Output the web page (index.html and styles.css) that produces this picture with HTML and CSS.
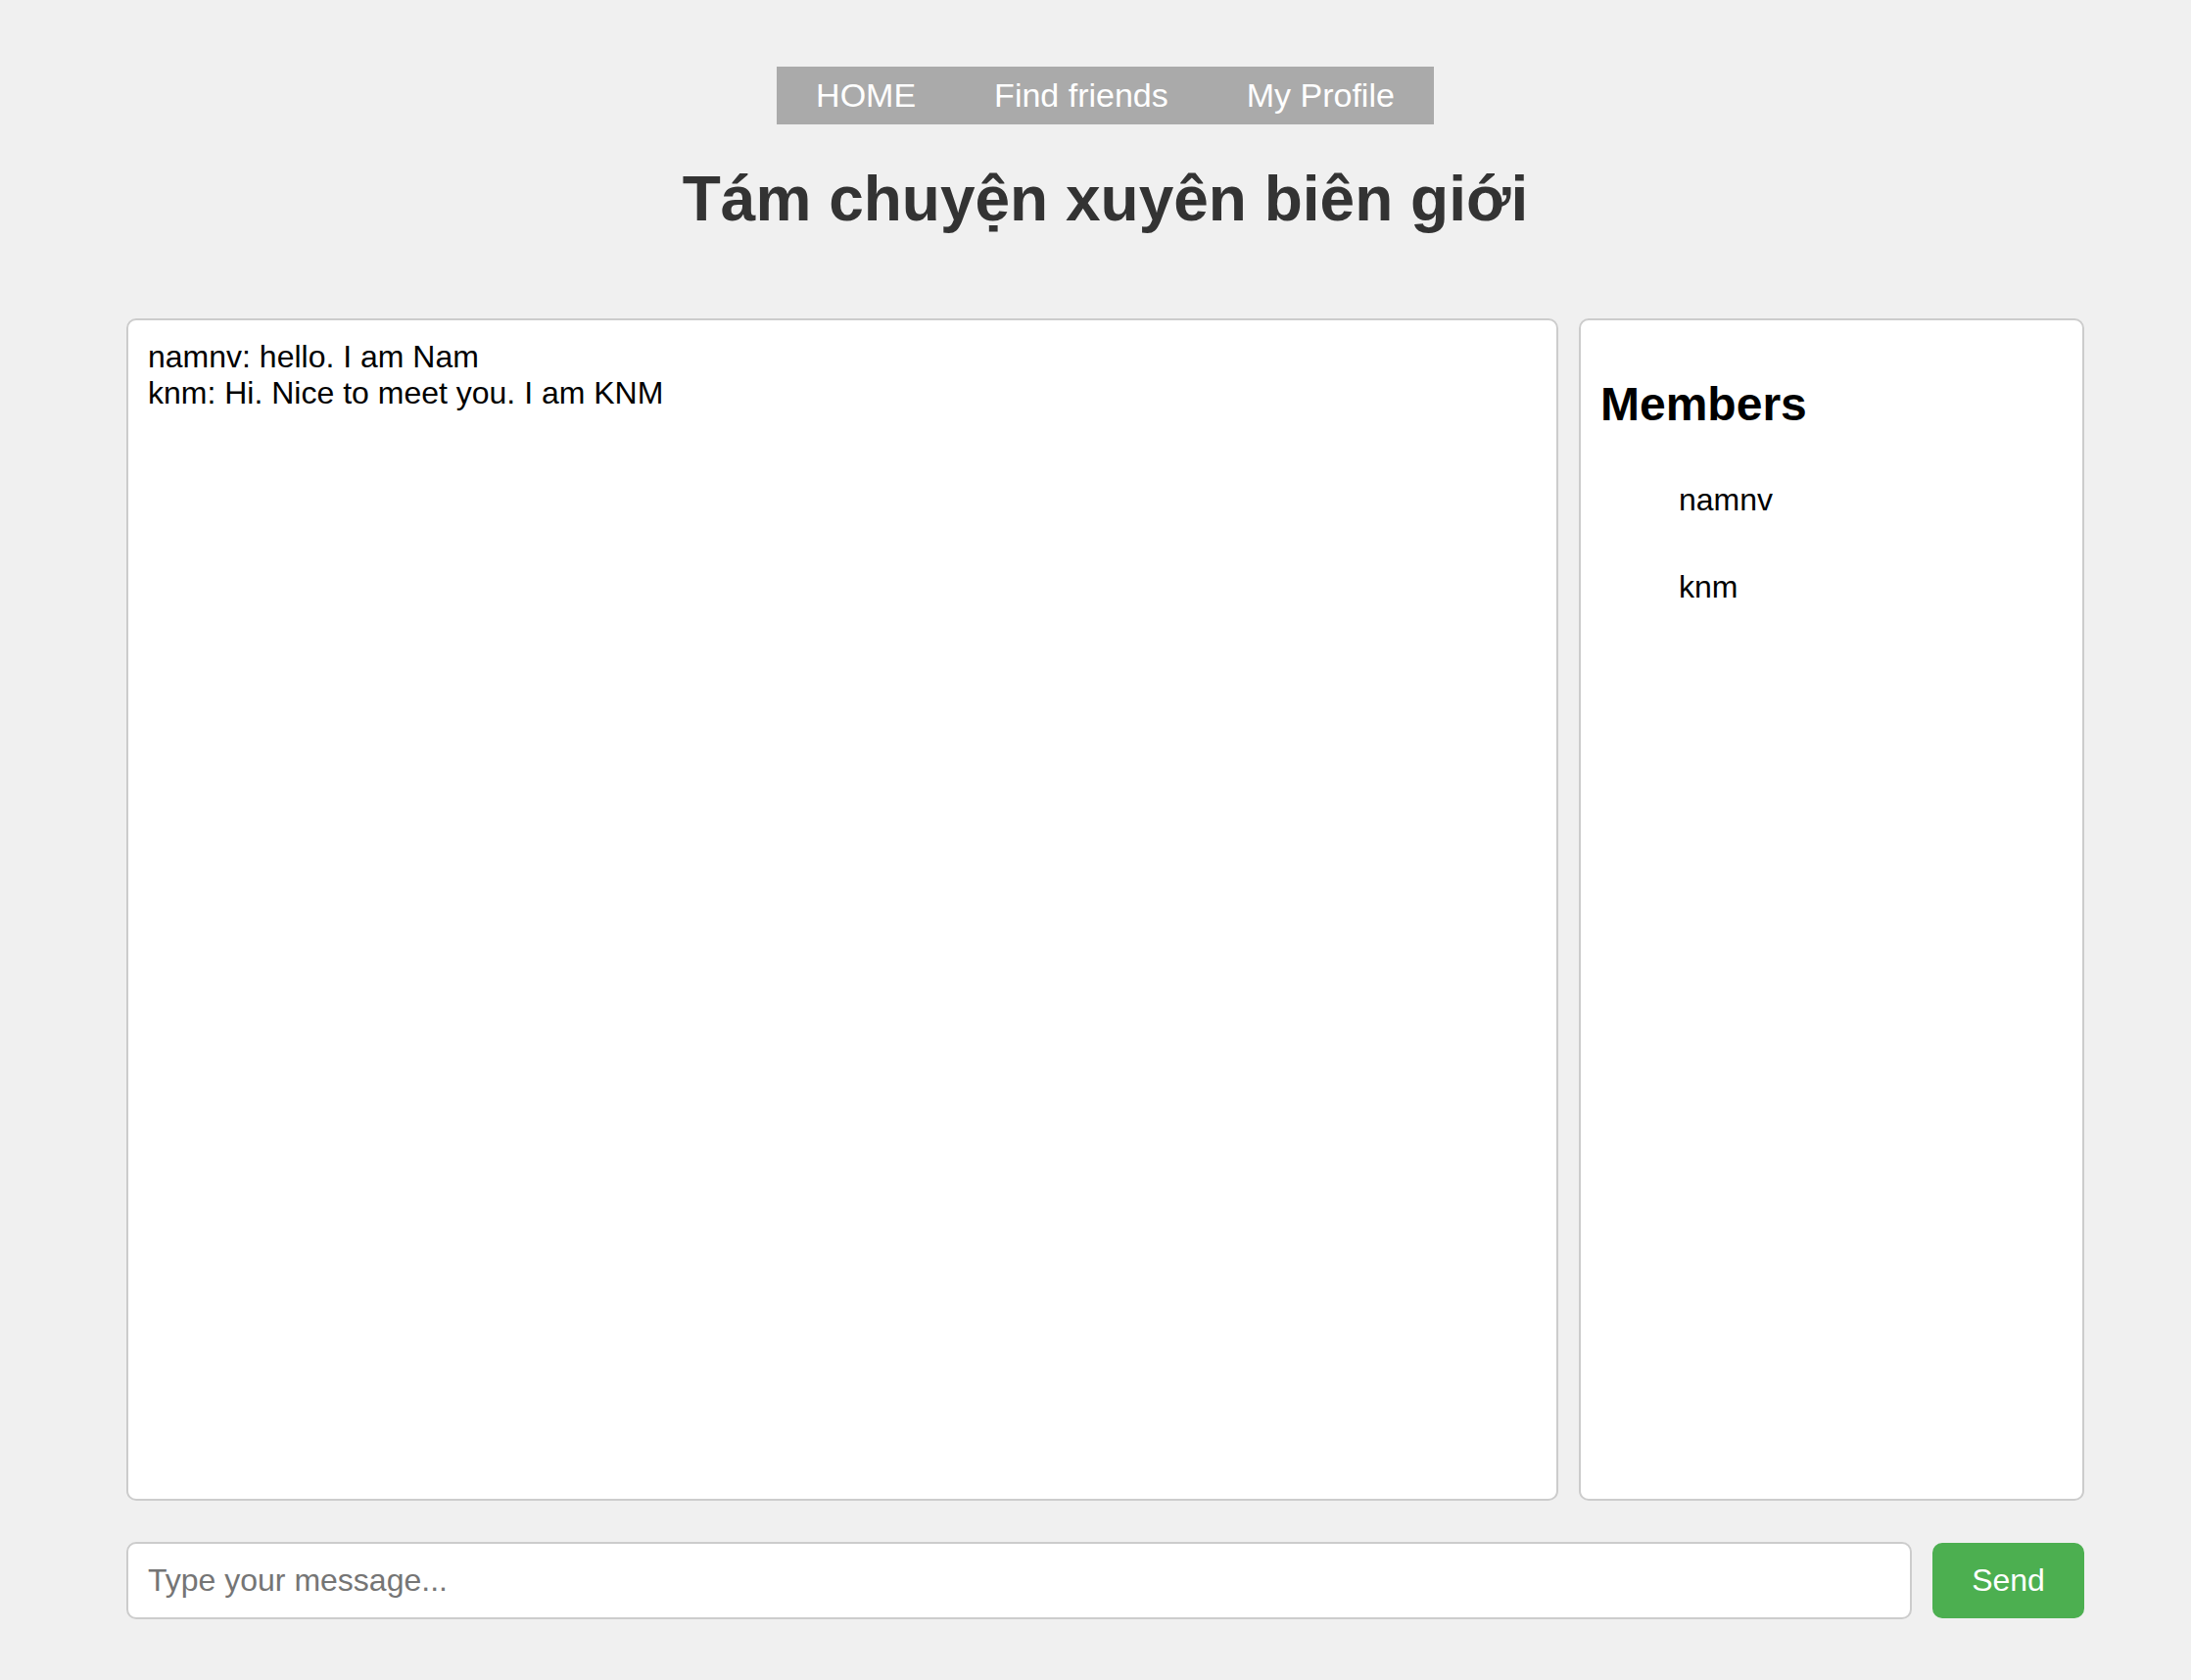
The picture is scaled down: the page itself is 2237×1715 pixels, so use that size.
FILE: index.html
```html
<!DOCTYPE html>
<html lang="vi">
<head>
<meta charset="utf-8">
<title>Tám chuyện xuyên biên giới</title>
<link rel="stylesheet" href="styles.css">
</head>
<body>
  <header class="header">
    <nav class="nav">
      <a class="nav-link" href="#">HOME</a>
      <a class="nav-link" href="#">Find friends</a>
      <a class="nav-link" href="#">My Profile</a>
    </nav>
    <h1 class="title">Tám chuyện xuyên biên giới</h1>
  </header>
  <main class="wrapper">
    <div class="chat-area">
      <div class="messages">
        <div class="message">namnv: hello. I am Nam</div>
        <div class="message">knm: Hi. Nice to meet you. I am KNM</div>
      </div>
      <aside class="members">
        <h2 class="members-title">Members</h2>
        <ul class="member-list">
          <li class="member">namnv</li>
          <li class="member">knm</li>
        </ul>
      </aside>
    </div>
    <form class="composer" onsubmit="return false">
      <input class="msg-input" type="text" placeholder="Type your message...">
      <button class="send-btn" type="submit">Send</button>
    </form>
  </main>
</body>
</html>
```
FILE: styles.css
```css
* { box-sizing: border-box; }

html, body {
  background: #f0f0f0;
}

body {
  margin: 0;
  padding: 0 0 0 20px;
  font-family: "Liberation Sans", Arial, Helvetica, sans-serif;
  color: #000;
}

.header {
  display: flex;
  flex-direction: column;
  align-items: center;
  padding-top: 68px;
}

.nav {
  display: flex;
  background: #aaaaaa;
}

.nav-link {
  display: block;
  padding: 10px 40px;
  font-size: 34px;
  line-height: 39px;
  color: #ffffff;
  text-decoration: none;
}

.title {
  margin: 40px 0 0;
  font-size: 64px;
  line-height: 73px;
  font-weight: bold;
  color: #333333;
  text-align: center;
}

.wrapper {
  width: 1999px;
  margin: 85px auto 0;
}

.chat-area {
  display: flex;
  gap: 21px;
  height: 1207px;
}

.messages {
  flex: 1;
  background: #fff;
  border: 2px solid #cccccc;
  border-radius: 10px;
  padding: 19px 20px 20px;
  font-size: 32px;
  line-height: 37px;
}

.members {
  width: 516px;
  background: #fff;
  border: 2px solid #cccccc;
  border-radius: 10px;
  padding: 20px;
}

.members-title {
  margin: 38px 0 0;
  font-size: 48px;
  line-height: 55px;
  font-weight: bold;
}

.member-list {
  margin: 26px 0 0;
  padding-left: 80px;
  list-style: none;
}

.member {
  font-size: 32px;
  line-height: 37px;
  padding: 26px 0;
}

.composer {
  display: flex;
  align-items: center;
  gap: 21px;
  margin-top: 42px;
}

.msg-input {
  flex: 1;
  height: 79px;
  border: 2px solid #cccccc;
  border-radius: 10px;
  padding: 0 20px;
  font-family: "Liberation Sans", Arial, Helvetica, sans-serif;
  font-size: 32px;
  color: #000;
  background: #fff;
  outline: none;
}

.msg-input::placeholder {
  color: #757575;
}

.send-btn {
  width: 155px;
  height: 77px;
  border: none;
  border-radius: 10px;
  background: #4caf50;
  color: #fff;
  font-family: "Liberation Sans", Arial, Helvetica, sans-serif;
  font-size: 32px;
  cursor: pointer;
}
```
